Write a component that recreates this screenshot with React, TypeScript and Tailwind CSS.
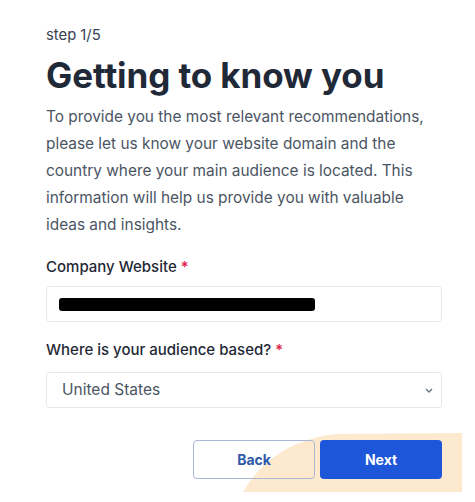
import React from "react";

export default function App() {
  return (
    <div
      className="w-[475px] h-[502px] bg-white relative overflow-hidden"
      style={{ fontFamily: "Inter, 'Noto Sans', sans-serif" }}
    >
      <svg
        className="absolute left-0 top-0 pointer-events-none"
        width="475"
        height="502"
        viewBox="0 0 475 502"
      >
        <path d="M243 492 Q268 449 318 437 Q330 434 340 434 L462 433 L462 492 Z" fill="#fde9cd" />
      </svg>
      <div className="relative px-[46px] pt-[26px]">
        <div className="text-[14.8px] leading-[18px] text-[#374151]">step 1/5</div>
        <h1 className="mt-[11px] text-[35px] leading-[40px] font-bold text-[#1f2937] tracking-[-0.1px]">
          Getting to know you
        </h1>
        <p className="mt-[8px] text-[15.4px] leading-[27px] text-[#4b5563] w-[396px]">
          To provide you the most relevant recommendations, please let us know your website domain and the country where your main audience is located. This information will help us provide you with valuable ideas and insights.
        </p>
        <div className="mt-[19px] text-[15px] leading-[20px] font-medium text-[#1f2937]">
          Company Website <span className="text-[#e11d48]">*</span>
        </div>
        <div className="mt-[9px] h-[36px] w-[396px] border border-[#e5e7eb] rounded-[4px] flex items-center px-[12px]">
          <div className="h-[13px] w-[256px] bg-black rounded-[3px]" />
        </div>
        <div className="mt-[18px] text-[15px] leading-[20px] font-medium text-[#1f2937]">
          Where is your audience based? <span className="text-[#e11d48]">*</span>
        </div>
        <div className="mt-[12px] h-[36px] w-[396px] border border-[#e5e7eb] rounded-[4px] flex items-center justify-between pl-[15px] pr-[7px]">
          <span className="text-[15.5px] text-[#4b5563]">United States</span>
          <svg width="10" height="10" viewBox="0 0 10 10">
            <path d="M2 4 L5 7 L8 4" fill="none" stroke="#6b7280" strokeWidth="1.4" />
          </svg>
        </div>
        <div className="mt-[32px] flex justify-end gap-[5px] w-[396px]">
          <button className="w-[122px] h-[39px] rounded-[4px] border border-[#a9b6d6] bg-transparent text-[14px] font-bold text-[#2f5aa8]">
            Back
          </button>
          <button className="w-[122px] h-[39px] rounded-[4px] bg-[#1d56d8] text-[14px] font-bold text-white">
            Next
          </button>
        </div>
      </div>
    </div>
  );
}
